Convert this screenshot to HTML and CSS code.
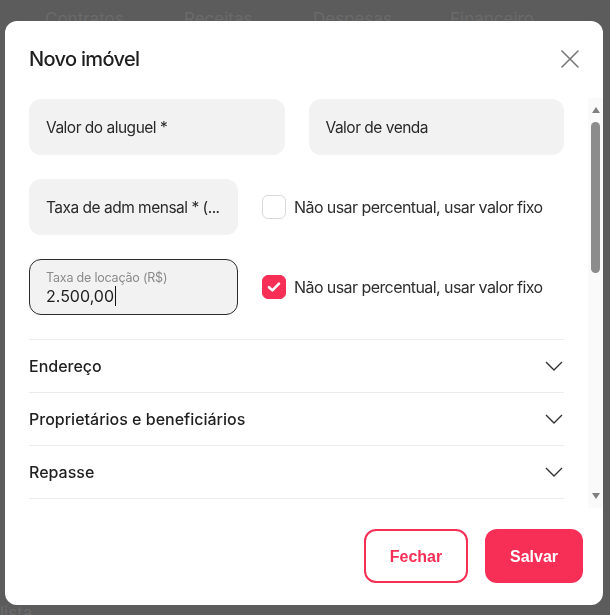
FILE: index.html
```html
<!DOCTYPE html>
<html lang="pt-BR">
<head>
<meta charset="utf-8">
<title>Novo imóvel</title>
<link rel="stylesheet" href="styles.css">
</head>
<body>
<div class="backdrop">
  <nav class="bg-nav">
    <span class="bg-item">Contratos <span class="bg-chev">⌄</span></span>
    <span class="bg-item">Receitas <span class="bg-chev">⌄</span></span>
    <span class="bg-item">Despesas <span class="bg-chev">⌄</span></span>
    <span class="bg-item">Financeiro <span class="bg-chev">⌄</span></span>
  </nav>
  <div class="bg-foot">lista</div>
</div>

<div class="modal">
  <header class="modal-head">
    <h1 class="modal-title">Novo imóvel</h1>
    <button class="close" aria-label="Fechar">
      <svg width="18" height="18" viewBox="0 0 18 18"><path d="M1 1L17 17M17 1L1 17" stroke="#777" stroke-width="1.6" fill="none" stroke-linecap="round"/></svg>
    </button>
  </header>

  <div class="body-wrap">
    <div class="modal-body">
      <div class="row two">
        <div class="field"><span class="placeholder">Valor do aluguel *</span></div>
        <div class="field"><span class="placeholder">Valor de venda</span></div>
      </div>

      <div class="row split">
        <div class="field"><span class="placeholder">Taxa de adm mensal * (...</span></div>
        <label class="check">
          <span class="box"></span>
          <span class="check-label">Não usar percentual, usar valor fixo</span>
        </label>
      </div>

      <div class="row split">
        <div class="field focused">
          <span class="float-label">Taxa de locação (R$)</span>
          <span class="value">2.500,00<span class="caret"></span></span>
        </div>
        <label class="check">
          <span class="box checked">
            <svg width="14" height="12" viewBox="0 0 14 12"><path d="M2 6.2L5.4 9.4L12 2.6" stroke="#fff" stroke-width="2.6" fill="none" stroke-linecap="round" stroke-linejoin="round"/></svg>
          </span>
          <span class="check-label">Não usar percentual, usar valor fixo</span>
        </label>
      </div>

      <div class="accordion">
        <div class="acc-item"><span>Endereço</span><svg class="chev" width="18" height="10" viewBox="0 0 18 10"><path d="M1 1L9 9L17 1" stroke="#333" stroke-width="1.4" fill="none"/></svg></div>
        <div class="acc-item"><span>Proprietários e beneficiários</span><svg class="chev" width="18" height="10" viewBox="0 0 18 10"><path d="M1 1L9 9L17 1" stroke="#333" stroke-width="1.4" fill="none"/></svg></div>
        <div class="acc-item"><span>Repasse</span><svg class="chev" width="18" height="10" viewBox="0 0 18 10"><path d="M1 1L9 9L17 1" stroke="#333" stroke-width="1.4" fill="none"/></svg></div>
      </div>
    </div>

    <div class="scrollbar" aria-hidden="true">
      <div class="sb-btn"><span class="tri up"></span></div>
      <div class="sb-track"><div class="sb-thumb"></div></div>
      <div class="sb-btn"><span class="tri down"></span></div>
    </div>
  </div>

  <footer class="modal-foot">
    <button class="btn outline">Fechar</button>
    <button class="btn solid">Salvar</button>
  </footer>
</div>
</body>
</html>
```

FILE: styles.css
```css
* { box-sizing: border-box; }

html, body {
  margin: 0;
  padding: 0;
  height: 100%;
}

body {
  background: #5c5c5c;
  font-family: Inter, "Noto Sans", sans-serif;
  overflow: hidden;
}

.backdrop {
  height: 100%;
  display: flex;
  flex-direction: column;
  justify-content: space-between;
  color: #6a6a6a;
}

.bg-nav {
  display: flex;
  padding: 9px 0 0 45px;
  font-size: 17px;
}

.bg-item { display: inline-block; }
.bg-item:nth-child(1) { width: 139px; }
.bg-item:nth-child(2) { width: 129px; }
.bg-item:nth-child(3) { width: 137px; }

.bg-chev { font-size: 12px; }

.bg-foot {
  font-size: 17px;
  line-height: 20px;
  margin-bottom: -8px;
}

.modal {
  position: fixed;
  left: 5px;
  top: 21px;
  width: 598px;
  height: 584px;
  background: #fff;
  border-radius: 12px;
  display: flex;
  flex-direction: column;
  overflow: hidden;
}

.modal-head {
  height: 77px;
  flex: none;
  display: flex;
  align-items: center;
  justify-content: space-between;
  padding: 0 24px;
}

.modal-title {
  margin: 0;
  font-size: 20px;
  font-weight: 500;
  color: #1f1f1f;
  letter-spacing: -0.67px;
  padding-bottom: 1px;
}

.close {
  background: none;
  border: 0;
  padding: 0;
  width: 18px;
  height: 18px;
  display: flex;
  margin-bottom: 1px;
}

.body-wrap {
  height: 410px;
  flex: none;
  display: flex;
}

.modal-body {
  flex: 1;
  min-width: 0;
  overflow: hidden;
  padding: 1px 24px 0 24px;
}

.scrollbar {
  width: 15px;
  flex: none;
  background: #fafafa;
  display: flex;
  flex-direction: column;
}

.sb-btn {
  height: 24px;
  flex: none;
  display: flex;
  align-items: center;
  justify-content: center;
}

.tri {
  width: 0;
  height: 0;
  border-left: 4.5px solid transparent;
  border-right: 4.5px solid transparent;
}
.tri.up { border-bottom: 6px solid #808080; }
.tri.down { border-top: 6px solid #808080; }

.sb-track {
  flex: 1;
  padding: 0 3px;
}

.sb-thumb {
  height: 151px;
  background: #8c8c8c;
  border-radius: 5px;
}

.row {
  display: grid;
  gap: 24px;
  margin-bottom: 24px;
  align-items: center;
}
.row.two { grid-template-columns: 1fr 1fr; }
.row.split { grid-template-columns: 209px 1fr; }

.field {
  height: 56px;
  background: #f2f2f2;
  border-radius: 12px;
  padding: 0 17px;
  display: flex;
  flex-direction: column;
  justify-content: center;
  font-size: 15.5px;
  color: #2a2a2a;
  letter-spacing: -0.5px;
  white-space: nowrap;
}

.field.focused {
  border: 1px solid #2b2b2b;
  padding: 10px 16px 0 16px;
  justify-content: flex-start;
}

.float-label {
  font-size: 12.5px;
  color: #8a8a8a;
  line-height: 16px;
  letter-spacing: -0.2px;
}

.value {
  font-size: 16px;
  color: #1f1f1f;
  line-height: 20px;
  letter-spacing: 0;
  display: flex;
  align-items: center;
}

.caret {
  display: inline-block;
  width: 1px;
  height: 20px;
  background: #111;
  margin-left: 1px;
}

.check {
  display: flex;
  align-items: center;
  gap: 8px;
}

.box {
  width: 24px;
  height: 24px;
  border: 1px solid #d9d9d9;
  border-radius: 6px;
  background: #fff;
  display: flex;
  align-items: center;
  justify-content: center;
  flex: none;
}

.box.checked {
  background: #f72f56;
  border-color: #f72f56;
}

.check-label {
  font-size: 16px;
  color: #2e2e2e;
  letter-spacing: -0.57px;
  white-space: nowrap;
}

.accordion {
  border-top: 1px solid #ececec;
}

.acc-item {
  height: 53px;
  border-bottom: 1px solid #ececec;
  display: flex;
  align-items: center;
  justify-content: space-between;
  font-size: 16px;
  font-weight: 500;
  color: #1f1f1f;
  letter-spacing: 0;
  padding-right: 1px;
}

.chev { margin-bottom: 1px; }

.modal-foot {
  flex: 1;
  display: flex;
  justify-content: flex-end;
  align-items: flex-start;
  gap: 17px;
  padding: 21px 20px 0 0;
}

.btn {
  height: 54px;
  border-radius: 12px;
  font-family: "Liberation Sans", Arial, sans-serif;
  font-weight: bold;
  font-size: 16px;
  cursor: pointer;
  padding-top: 3px;
}

.btn.outline {
  width: 104px;
  background: #fff;
  border: 2px solid #f72f56;
  color: #f72f56;
}

.btn.solid {
  width: 98px;
  background: #f72f56;
  border: 0;
  color: #fff;
}
```
